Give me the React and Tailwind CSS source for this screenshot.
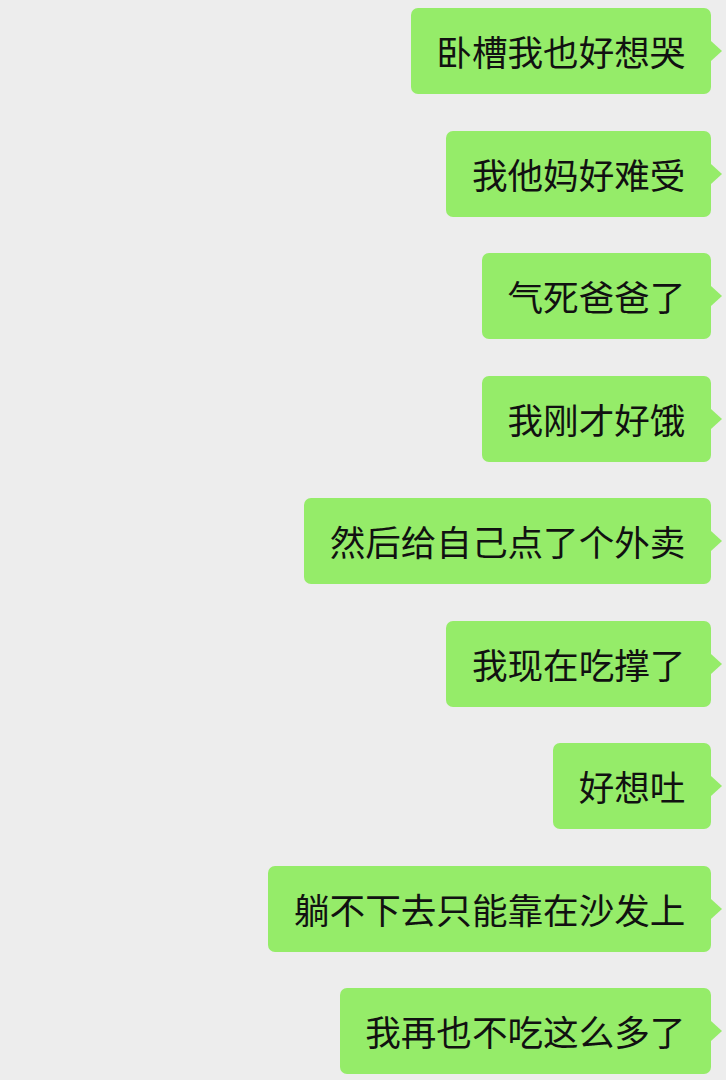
import React from "react";

const msgs = [
  "卧槽我也好想哭",
  "我他妈好难受",
  "气死爸爸了",
  "我刚才好饿",
  "然后给自己点了个外卖",
  "我现在吃撑了",
  "好想吐",
  "躺不下去只能靠在沙发上",
  "我再也不吃这么多了",
];

export default function App() {
  return (
    <div
      className="w-[726px] h-[1080px] bg-[#ededed] overflow-hidden flex flex-col items-end gap-[36.5px] pt-[8px] pr-[15px]"
      style={{ fontFamily: '"Noto Sans CJK SC", "Noto Sans", sans-serif' }}
    >
      {msgs.map((m) => (
        <div key={m} className="relative">
          <div className="h-[86px] flex items-center px-[25.6px] bg-[#95ec69] rounded-[7px] text-[35.6px] leading-none text-[#111111] whitespace-nowrap">
            {m}
          </div>
          <div className="absolute top-1/2 right-[-11px] -translate-y-1/2 w-0 h-0 border-y-[10px] border-y-transparent border-l-[11px] border-l-[#95ec69]" />
        </div>
      ))}
    </div>
  );
}
